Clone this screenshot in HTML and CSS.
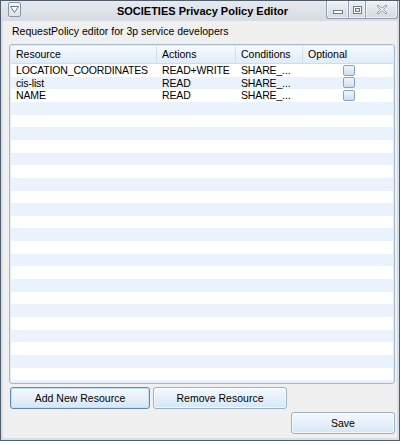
FILE: index.html
```html
<!DOCTYPE html>
<html>
<head>
<meta charset="utf-8">
<link rel="stylesheet" href="styles.css">
</head>
<body>
<div class="window">
  <div class="titlebar">
    <div class="sysmenu">
      <svg width="11" height="13" viewBox="0 0 11 13"><path d="M1.5 3.5 H9.5 L5.5 9.5 Z" fill="#fff" stroke="#6b7886" stroke-width="1"/></svg>
    </div>
    <div class="title">SOCIETIES Privacy Policy Editor</div>
    <div class="caption">
      <div class="cb cb-min">
        <svg width="12" height="8" viewBox="0 0 12 8"><rect x="1.5" y="3.5" width="9" height="3" fill="#fff" stroke="#6f7c8b"/></svg>
      </div>
      <div class="cb cb-max">
        <svg width="11" height="10" viewBox="0 0 11 10"><rect x="1.5" y="1.5" width="8" height="7" fill="#fff" stroke="#6f7c8b"/><rect x="3.5" y="3.5" width="4" height="3" fill="#dfe4ea" stroke="#6f7c8b"/></svg>
      </div>
      <div class="cb cb-close">
        <svg width="12" height="11" viewBox="0 0 12 11"><path d="M2 1 L6 4.2 L10 1 L11 2 L7.3 5.5 L11 9 L10 10 L6 6.8 L2 10 L1 9 L4.7 5.5 L1 2 Z" fill="#fff" stroke="#7b8796" stroke-width="0.8"/></svg>
      </div>
    </div>
  </div>
  <div class="client">
    <div class="label">RequestPolicy editor for 3p service developers</div>
    <div class="table">
      <div class="thead">
        <div class="th">Resource</div>
        <div class="th">Actions</div>
        <div class="th">Conditions</div>
        <div class="th">Optional</div>
      </div>
      <div class="tbody">
        <div class="tr">
          <div class="td">LOCATION_COORDINATES</div>
          <div class="td">READ+WRITE</div>
          <div class="td">SHARE_...</div>
          <div class="td td-check"><span class="check"></span></div>
        </div>
        <div class="tr">
          <div class="td">cis-list</div>
          <div class="td">READ</div>
          <div class="td">SHARE_...</div>
          <div class="td td-check"><span class="check"></span></div>
        </div>
        <div class="tr">
          <div class="td">NAME</div>
          <div class="td">READ</div>
          <div class="td">SHARE_...</div>
          <div class="td td-check"><span class="check"></span></div>
        </div>
      </div>
    </div>
    <div class="btnrow">
      <button class="btn btn-add">Add New Resource</button>
      <button class="btn btn-remove">Remove Resource</button>
    </div>
    <div class="saverow">
      <button class="btn btn-save">Save</button>
    </div>
  </div>
</div>
</body>
</html>
```

FILE: styles.css
```css
* { box-sizing: border-box; }

body {
  margin: 0;
  background: #ffffff;
  font-family: "Liberation Sans", Arial, sans-serif;
  font-size: 10.5px;
  color: #000;
}

.window {
  width: 400px;
  height: 441px;
  border: 1px solid #4f5d6d;
  background: #d8dee5;
  padding: 0 2px 2px 2px;
  display: flex;
  flex-direction: column;
}

.titlebar {
  height: 20px;
  margin: 0 -2px;
  padding-right: 1px;
  display: grid;
  grid-template-columns: 1fr auto 1fr;
  align-items: start;
  background: linear-gradient(#e6eaef, #d6dce3);
}

.sysmenu {
  justify-self: start;
  margin: 1px 0 0 7px;
  width: 13px;
  height: 15px;
  border: 1px solid #8a96a4;
  border-radius: 2px;
  background: linear-gradient(#f4f6f8, #dde2e8);
  display: flex;
  align-items: center;
  justify-content: center;
}

.title {
  font-weight: bold;
  font-size: 11px;
  line-height: 20px;
  padding-left: 6px;
  color: #000;
}

.caption {
  justify-self: end;
  display: flex;
}

.cb {
  height: 18px;
  border: 1px solid #8f9cac;
  border-top: none;
  background: linear-gradient(#eef1f4, #d4dae1);
  box-shadow: inset 0 0 0 1px rgba(255,255,255,0.6);
  display: flex;
  align-items: center;
  justify-content: center;
}

.cb-min { width: 22px; border-right: none; border-bottom-left-radius: 3px; }
.cb-min svg { margin-top: 3px; }
.cb-max { width: 17px; border-right: none; }
.cb-close { width: 33px; border-bottom-right-radius: 3px; }

.client {
  flex: 1;
  background: #f0f0f0;
  padding: 3px 2px 0 6px;
  display: flex;
  flex-direction: column;
}

.label {
  line-height: 14px;
  padding-left: 3px;
}

.table {
  margin-top: 6px;
  height: 340px;
  border: 1px solid #a3bbd8;
  border-radius: 3px;
  padding: 1px;
  background: #fff;
  box-shadow: inset 0 0 0 1px #dfeaf6;
  display: flex;
  flex-direction: column;
}

.thead {
  display: grid;
  grid-template-columns: 145px 79px 67px 1fr;
  height: 18px;
  border-bottom: 1px solid #cfdcec;
  background: linear-gradient(#f6fafe, #dfecf9);
}

.th {
  line-height: 17px;
  padding-left: 5px;
  border-left: 1px solid #d3dfec;
}
.th:first-child { border-left: none; padding-left: 5px; }

.tbody {
  flex: 1;
  background: repeating-linear-gradient(#ffffff 0, #ffffff 12.65px, #eaf3fc 12.65px, #eaf3fc 25.3px);
}

.tr {
  display: grid;
  grid-template-columns: 145px 79px 67px 1fr;
  height: 12.65px;
}

.td {
  line-height: 12.65px;
  padding-left: 5px;
  white-space: nowrap;
  overflow: hidden;
  letter-spacing: -0.15px;
}
.td + .td { padding-left: 5px; margin-left: 1px; }

.td-check {
  display: flex;
  align-items: center;
  justify-content: center;
  padding-left: 0;
}
.td + .td-check { padding-left: 0; }

.check {
  width: 12px;
  height: 11px;
  border: 1px solid #86a3c6;
  border-radius: 2px;
  background: linear-gradient(#f1f6fc, #cfdef0);
  margin-left: 2px;
}

.btnrow {
  margin-top: 3px;
  display: flex;
  gap: 3px;
  padding-left: 1px;
}

.saverow {
  margin-top: 3px;
  display: flex;
  justify-content: flex-end;
}

.btn {
  font-family: "Liberation Sans", Arial, sans-serif;
  font-size: 10.5px;
  color: #000;
  height: 22px;
  padding: 0;
  border: 1px solid #9ab1cd;
  border-radius: 3px;
  background: linear-gradient(#f3f8fd 0%, #e6f0fa 50%, #d5e6f6 100%);
  box-shadow: inset 0 0 0 1px rgba(255,255,255,0.7);
}

.btn-add {
  width: 140px;
  border-color: #5f88b5;
  box-shadow: inset 0 0 0 1px #c6e0f7;
}
.btn-remove { width: 134px; }
.btn-save { width: 104px; height: 22px; }
```
